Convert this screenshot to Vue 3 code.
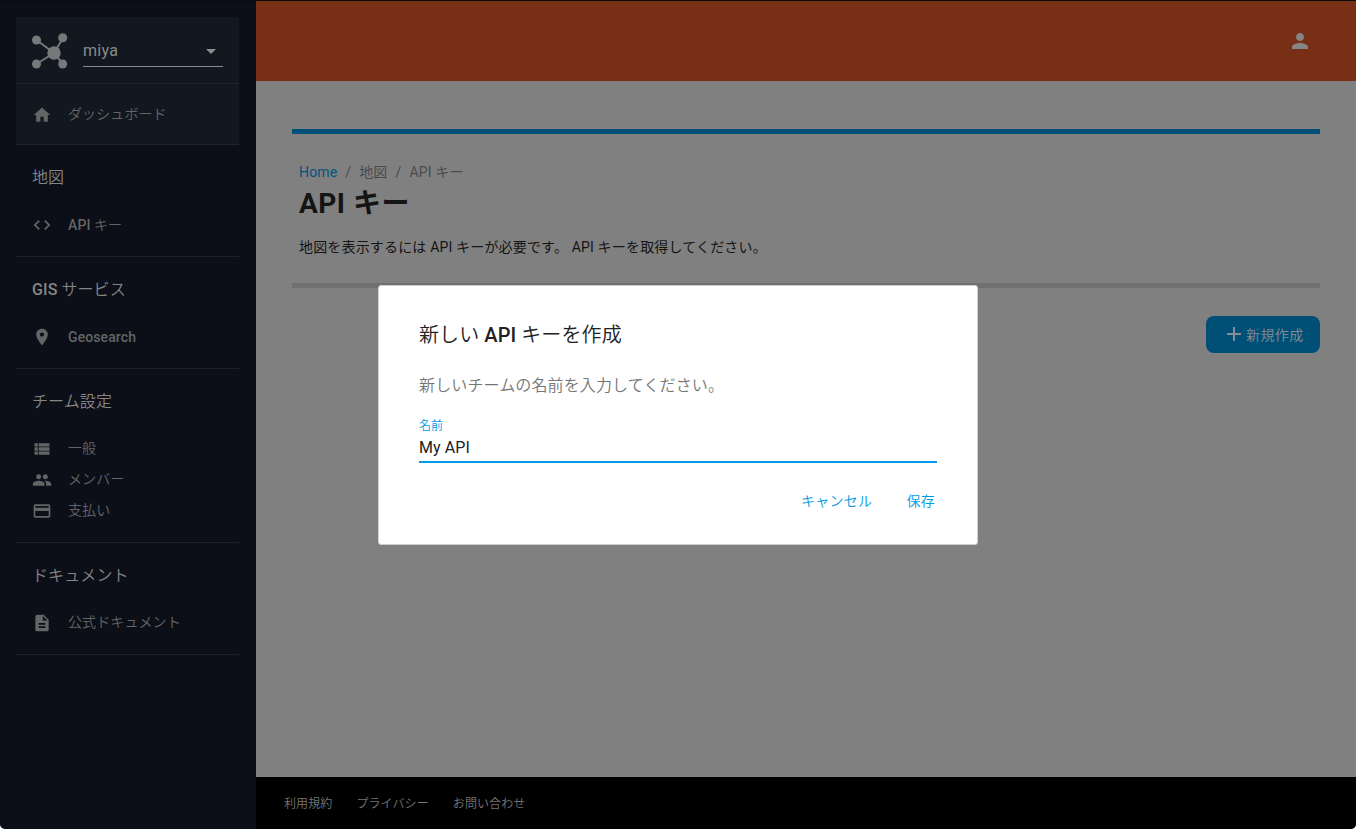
<script setup>
const sections = [
  { title: '地図', items: [{ latin: 'API', label: 'キー', icon: 'code' }] },
  { latin: 'GIS', title: 'サービス', items: [{ latin: 'Geosearch', icon: 'place' }] },
  {
    title: 'チーム設定',
    items: [
      { label: '一般', icon: 'list' },
      { label: 'メンバー', icon: 'people' },
      { label: '支払い', icon: 'card' },
    ],
  },
  { title: 'ドキュメント', items: [{ label: '公式ドキュメント', icon: 'doc' }] },
]

const icons = {
  home: 'M10 20v-6h4v6h5v-8h3L12 3 2 12h3v8z',
  code: 'M9.4 16.6L4.8 12l4.6-4.6L8 6l-6 6 6 6 1.4-1.4zm5.2 0l4.6-4.6-4.6-4.6L16 6l6 6-6 6-1.4-1.4z',
  place: 'M12 2C8.13 2 5 5.13 5 9c0 5.25 7 13 7 13s7-7.75 7-13c0-3.87-3.13-7-7-7zm0 9.5c-1.38 0-2.5-1.12-2.5-2.5s1.12-2.5 2.5-2.5 2.5 1.12 2.5 2.5-1.12 2.5-2.5 2.5z',
  list: 'M3 14h4v-4H3v4zm0 5h4v-4H3v4zM3 9h4V5H3v4zm5 5h13v-4H8v4zm0 5h13v-4H8v4zM8 5v4h13V5H8z',
  people: 'M16 11c1.66 0 2.99-1.34 2.99-3S17.66 5 16 5c-1.66 0-3 1.34-3 3s1.34 3 3 3zm-8 0c1.66 0 2.99-1.34 2.99-3S9.66 5 8 5C6.34 5 5 6.34 5 8s1.34 3 3 3zm0 2c-2.33 0-7 1.17-7 3.5V19h14v-2.5c0-2.33-4.67-3.5-7-3.5zm8 0c-.29 0-.62.02-.97.05 1.16.84 1.97 1.97 1.97 3.45V19h6v-2.5c0-2.33-4.67-3.5-7-3.5z',
  card: 'M20 4H4c-1.11 0-1.99.89-1.99 2L2 18c0 1.11.89 2 2 2h16c1.11 0 2-.89 2-2V6c0-1.11-.89-2-2-2zm0 14H4v-6h16v6zm0-10H4V6h16v2z',
  doc: 'M14 2H6c-1.1 0-1.99.9-1.99 2L4 20c0 1.1.89 2 1.99 2H18c1.1 0 2-.9 2-2V8l-6-6zm2 16H8v-2h8v2zm0-4H8v-2h8v2zm-3-5V3.5L18.5 9H13z',
  person: 'M12 12c2.21 0 4-1.79 4-4s-1.79-4-4-4-4 1.79-4 4 1.79 4 4 4zm0 2c-2.67 0-8 1.34-8 4v2h16v-2c0-2.66-5.33-4-8-4z',
}
</script>

<template>
  <div class="app">
    <aside class="sidebar">
      <div class="team">
        <svg class="logo" viewBox="0 0 36 36" width="36" height="36">
          <g stroke="currentColor" stroke-width="2">
            <path d="M4.5 7 22 20M31 5 22 20M4.5 31 22 20M31 31 22 20" />
          </g>
          <g fill="currentColor">
            <circle cx="4.5" cy="7" r="4.5" /><circle cx="30.7" cy="4.7" r="4.5" />
            <circle cx="4.5" cy="31" r="4.5" /><circle cx="30.7" cy="31" r="4.5" />
            <circle cx="22" cy="20" r="6.7" />
          </g>
        </svg>
        <div class="select">
          <span>miya</span>
          <svg viewBox="0 0 24 24" width="24" height="24"><path fill="currentColor" d="M7 10l5 5 5-5z" /></svg>
        </div>
      </div>
      <div class="dashboard item">
        <svg viewBox="0 0 24 24"><path :d="icons.home" /></svg>
        <span>ダッシュボード</span>
      </div>
      <section v-for="s in sections" :key="s.title" class="group">
        <h2><b v-if="s.latin">{{ s.latin }}</b> {{ s.title }}</h2>
        <div v-for="i in s.items" :key="i.icon" class="item">
          <svg viewBox="0 0 24 24"><path :d="icons[i.icon]" /></svg>
          <span><b v-if="i.latin">{{ i.latin }}</b> {{ i.label }}</span>
        </div>
      </section>
    </aside>

    <div class="page">
      <header class="topbar">
        <svg viewBox="0 0 24 24" width="24" height="24"><path :d="icons.person" /></svg>
      </header>
      <main class="content">
        <div class="intro">
          <nav class="crumbs">
            <a>Home</a><i>/</i><span>地図</span><i>/</i><span>API キー</span>
          </nav>
          <h1>API キー</h1>
          <p>地図を表示するには API キーが必要です。 API キーを取得してください。</p>
        </div>
        <button class="create">
          <svg viewBox="0 0 14 14" width="14" height="14"><path d="M7 0v14M0 7h14" stroke="currentColor" stroke-width="2" /></svg>
          <span>新規作成</span>
        </button>
      </main>
      <footer class="footer">
        <span>利用規約</span><span>プライバシー</span><span>お問い合わせ</span>
      </footer>
    </div>

    <div class="overlay">
      <div class="dialog">
        <h3>新しい <b>API</b> キーを作成</h3>
        <p>新しいチームの名前を入力してください。</p>
        <label>名前</label>
        <div class="input">My API</div>
        <div class="actions"><span>キャンセル</span><span>保存</span></div>
      </div>
    </div>
  </div>
</template>

<style>
body {
  margin: 0;
  background: #fff;
}
</style>

<style scoped>
* {
  box-sizing: border-box;
}
.app {
  position: relative;
  display: flex;
  width: 1356px;
  height: 829px;
  overflow: hidden;
  border-top: 1px solid #0b0b0c;
  border-radius: 0 0 5px 5px;
  background: #808080;
  font-family: Roboto, "Noto Sans CJK JP", sans-serif;
  font-size: 14px;
}
h1, h2, h3, p {
  margin: 0;
}
b {
  font-weight: 500;
}
.sidebar {
  width: 256px;
  padding: 16px 17px 0 16px;
  background: #0c0f17;
  color: #646566;
}
.team {
  display: flex;
  height: 67px;
  padding: 16px 16px 0 15.5px;
  border-bottom: 1px solid #20252c;
  background: #11181f;
  color: #777879;
}
.logo {
  flex: none;
}
.select {
  display: flex;
  flex: 1;
  align-items: center;
  justify-content: space-between;
  height: 34px;
  margin-left: 15.5px;
  border-bottom: 1px solid #8a8b8c;
  color: #898b8c;
  font-size: 16px;
  letter-spacing: 0.25px;
}
.select span {
  padding-top: 2px;
}
.select svg {
  margin-top: 2px;
}
.item {
  display: flex;
  align-items: center;
  height: 31px;
  padding-left: 16px;
  font-weight: 350;
  letter-spacing: 0.1px;
}
.item span {
  height: 20px;
  line-height: 20px;
}
.group .item:nth-of-type(n + 1) span:not(:has(b)) {
  line-height: 18px;
}
.item svg {
  width: 20px;
  height: 20px;
  margin-right: 16px;
  fill: currentColor;
}
.dashboard {
  height: 61px;
  border-bottom: 1px solid #20252c;
  background: #11181f;
}
.dashboard svg {
  margin-top: 1px;
}
.group {
  padding: 16px 0;
  border-bottom: 1px solid #1c1f26;
}
.group h2 {
  height: 32px;
  margin-bottom: 16px;
  padding-left: 16px;
  color: #858687;
  font-size: 16px;
  font-weight: 350;
  line-height: 33px;
  letter-spacing: 0.1px;
}
.page {
  display: flex;
  flex: 1;
  flex-direction: column;
}
.topbar {
  display: flex;
  align-items: center;
  justify-content: flex-end;
  height: 80px;
  padding-right: 44px;
  background: #772f15;
}
.topbar svg {
  fill: #878484;
}
.content {
  display: flex;
  flex: 1;
  flex-direction: column;
  align-items: flex-end;
  padding: 48px 36px 0;
}
.intro {
  align-self: stretch;
  height: 159px;
  padding: 28px 7px 0;
  border-top: 5px solid #004f77;
  border-bottom: 5px solid #707070;
  color: #141414;
}
.crumbs {
  display: flex;
  height: 20px;
  color: #4b4b4b;
  line-height: 20px;
  letter-spacing: 0.15px;
}
.crumbs a {
  color: #005480;
}
.crumbs i {
  margin: 0 8px;
  font-style: normal;
}
h1 {
  height: 42px;
  font-size: 28px;
  font-weight: 700;
  line-height: 43px;
  letter-spacing: 0.5px;
}
.intro p {
  margin-top: 12px;
  line-height: 22px;
  letter-spacing: 0.17px;
}
.create {
  display: flex;
  align-items: center;
  gap: 5px;
  width: 114px;
  height: 37px;
  margin-top: 28px;
  padding: 0 0 2px 21px;
  border: 0;
  border-radius: 8px;
  background: #004f77;
  color: #878d91;
  font: inherit;
  font-weight: 350;
  letter-spacing: 0.4px;
}
.footer {
  display: flex;
  align-items: center;
  gap: 24px;
  height: 52px;
  padding: 0 0 2px 28px;
  background: #000;
  color: #767676;
  font-size: 12px;
  font-weight: 350;
  letter-spacing: 0.1px;
}
.overlay {
  position: absolute;
  inset: 0;
  display: flex;
  align-items: center;
  justify-content: center;
}
.dialog {
  width: 600px;
  height: 260px;
  padding: 32px 40px;
  border: 1px solid #cecece;
  border-radius: 3px;
  background: #fff;
}
.dialog h3 {
  height: 34px;
  color: #212121;
  font-size: 20px;
  font-weight: 350;
  line-height: 34px;
  letter-spacing: 0.1px;
}
.dialog p {
  margin-top: 20px;
  color: #757575;
  font-size: 16px;
  font-weight: 350;
  line-height: 28px;
  letter-spacing: 0.13px;
}
.dialog label {
  display: block;
  margin-top: 17px;
  color: #039be5;
  font-size: 12px;
  font-weight: 350;
  line-height: 18px;
}
.input {
  height: 28px;
  border-bottom: 2px solid #039be5;
  color: #212121;
  font-size: 16px;
  line-height: 25px;
  letter-spacing: 0.1px;
}
.actions {
  display: flex;
  gap: 34px;
  justify-content: flex-end;
  padding-right: 2px;
  margin-top: 27px;
  color: #039be5;
  font-weight: 350;
  line-height: 22px;
  letter-spacing: 0.3px;
}
</style>
